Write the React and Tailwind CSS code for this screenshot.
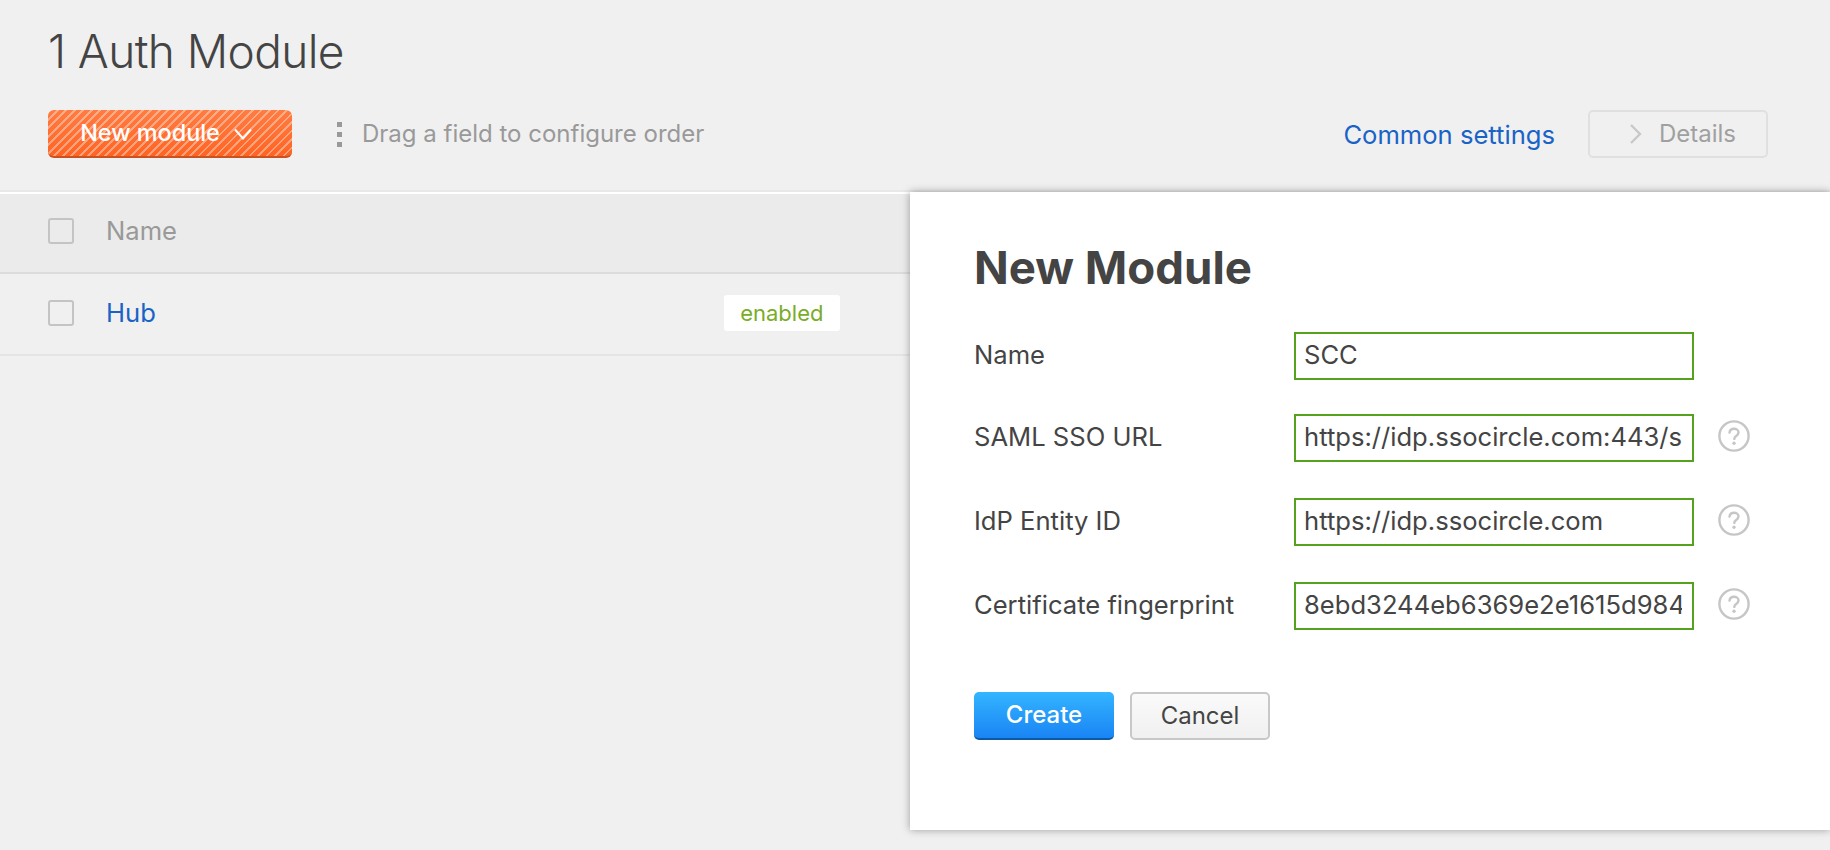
const fields = [
  { label: "Name", value: "SCC" },
  { label: "SAML SSO URL", value: "https://idp.ssocircle.com:443/sso/SSORedirect/metaAlias/publicidp", help: true },
  { label: "IdP Entity ID", value: "https://idp.ssocircle.com", help: true },
  { label: "Certificate fingerprint", value: "8ebd3244eb6369e2e1615d98475bd1c2a9e07f36", help: true },
];

function Checkbox() {
  return <span className="block w-[26px] h-[26px] rounded-[3px] border-2 border-[#c4c4c4]" />;
}

function HelpIcon() {
  return (
    <svg width="32" height="32" viewBox="0 0 32 32" fill="none" className="ml-[24px] mb-[4px]">
      <circle cx="16" cy="16" r="14.6" stroke="#c6c6c6" strokeWidth="2.4" />
      <path d="M11.5 12.6c.3-2.5 2.200-3.800 4.600-3.800 2.500 0 4.400 1.500 4.400 3.600 0 1.700-1 2.600-2.300 3.500-1.300.9-1.900 1.500-1.900 3" stroke="#c6c6c6" strokeWidth="2.400" strokeLinecap="round" />
      <circle cx="16" cy="23.200" r="1.700" fill="#c6c6c6" />
    </svg>
  );
}

export default function App() {
  return (
    <div className="relative w-full h-[850px] overflow-hidden bg-[#f0f0f0] text-[#444444] font-['Inter',sans-serif] text-[25.6px]">
      <div className="px-[48px] h-[190px]">
        <h1 className="pt-[21px] text-[46px] leading-[60px] font-[350] tracking-[-0.6px]">1 Auth Module</h1>

        <div className="flex items-center mt-[29px] h-[48px]">
          <button className="flex items-center justify-center w-[244px] h-[48px] pr-[7px] rounded-[6px] border-b-2 border-[#c9521f] text-white text-[23.4px] font-medium bg-[repeating-linear-gradient(135deg,rgba(255,255,255,0.38)_0,rgba(255,255,255,0.38)_2px,transparent_2px,transparent_6px),linear-gradient(#ff7c42,#ff6423)]">
            New module
            <svg width="20" height="14" viewBox="0 0 20 14" fill="none" className="ml-[13px] mt-[2px]">
              <path d="M2 2.500l8 9 8-9" stroke="white" strokeWidth="2" />
            </svg>
          </button>

          <div className="flex flex-col gap-[5px] ml-[45px]">
            <span className="w-[5px] h-[5px] bg-[#999999]" />
            <span className="w-[5px] h-[5px] bg-[#999999]" />
            <span className="w-[5px] h-[5px] bg-[#999999]" />
          </div>
          <span className="ml-[20px] text-[#999999] text-[24px]">Drag a field to configure order</span>

          <a className="ml-auto mt-[3px] text-[#1a63c6]">Common settings</a>
          <button className="flex items-center justify-center ml-[33px] mr-[14px] w-[180px] h-[48px] pl-[9px] rounded-[5px] border-2 border-[#e0e0e0] text-[#a0a0a0] text-[24px]">
            <svg width="14" height="22" viewBox="0 0 14 22" fill="none" className="mr-[16px]">
              <path d="M2 2l9 9-9 9" stroke="#c8c8c8" strokeWidth="2.400" />
            </svg>
            Details
          </button>
        </div>
      </div>

      <div className="border-t-2 border-b-2 border-t-[#e8e8e8] border-b-white h-[4px]" />
      <div className="flex items-center gap-[32px] h-[80px] pb-[4px] px-[48px] bg-[#ebebeb] border-b-2 border-[#dcdcdc] text-[#999999]">
        <Checkbox />
        <span>Name</span>
      </div>
      <div className="flex items-center gap-[32px] h-[82px] pb-[2px] px-[48px] border-b-2 border-[#e4e4e4]">
        <Checkbox />
        <a className="text-[#1a63c6]">Hub</a>
        <span className="flex items-center justify-center ml-[536px] w-[116px] h-[36px] rounded-[3px] bg-white text-[#7aac28] text-[22px]">enabled</span>
      </div>

      <div className="absolute right-0 top-[192px] w-[920px] h-[638px] bg-white pl-[64px] pt-[46px] shadow-[0_0_8px_rgba(0,0,0,0.35)]">
        <h2 className="text-[45.6px] leading-[60px] font-bold">New Module</h2>

        <div className="mt-[34px] flex flex-col gap-[36px]">
          {fields.map((field, i) => (
            <div key={field.label} className={i === 0 ? "flex items-center h-[48px] mb-[-2px]" : "flex items-center h-[48px]"}>
              <label className="w-[320px] pb-[2px]">{field.label}</label>
              <input
                readOnly
                value={field.value}
                className="w-[400px] h-[48px] pl-[8px] pr-[10px] pb-[4px] border-2 border-[#55a21f] outline-none text-[#444444]"
              />
              {field.help && <HelpIcon />}
            </div>
          ))}
        </div>

        <div className="flex gap-[16px] mt-[62px] text-[24px]">
          <button className="w-[140px] h-[48px] rounded-[5px] border-b-2 border-[#0c5aa6] text-white font-medium bg-[linear-gradient(#33b5ff,#1a84f5)]">Create</button>
          <button className="w-[140px] h-[48px] rounded-[5px] border-2 border-[#c8c8c8] bg-[linear-gradient(#fafafa,#f0f0f0)]">Cancel</button>
        </div>
      </div>
    </div>
  );
}
